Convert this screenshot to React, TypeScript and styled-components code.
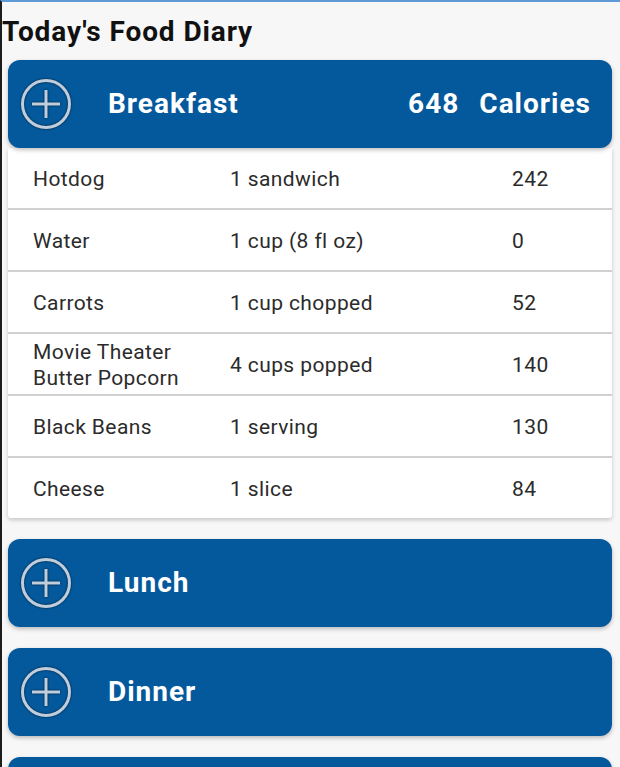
import React from "react";
import styled, { createGlobalStyle } from "styled-components";

const Global = createGlobalStyle`
  html, body { margin: 0; padding: 0; background: #f7f7f7; }
  body { font-family: Roboto, "Noto Sans", Arial, sans-serif; }
`;

const Page = styled.div`
  min-height: 100vh;
  box-sizing: border-box;
  border-top: 2px solid #5d9ad6;
  border-left: 2px solid #1c1c1c;
  background: #f7f7f7;
  padding: 16px 0 40px 0;
  overflow: hidden;
`;

const Title = styled.h1`
  margin: 0 0 14px 0;
  font-size: 28px;
  line-height: 28px;
  letter-spacing: 0.9px;
  font-weight: 700;
  color: #111;
`;

const Sections = styled.div`
  display: flex;
  flex-direction: column;
  gap: 21px;
  padding: 0 8px 0 6px;
`;

const Meal = styled.section`
  display: flex;
  flex-direction: column;
`;

const Header = styled.div`
  height: 88px;
  box-sizing: border-box;
  display: flex;
  align-items: center;
  background: #04599c;
  border-radius: 12px;
  padding: 0 21px 0 12px;
  color: #fff;
  box-shadow: 0 2px 4px rgba(0, 0, 0, 0.25);
  position: relative;
  z-index: 1;
`;

const IconWrap = styled.div`
  width: 52px;
  height: 52px;
  display: flex;
  align-items: center;
  justify-content: center;
  filter: drop-shadow(0 0 1px rgba(0, 0, 0, 0.7));
`;

const HeadText = styled.span`
  font-size: 28px;
  font-weight: 700;
  letter-spacing: 1px;
  line-height: 32px;
`;

const MealName = styled(HeadText)`
  margin-left: 36px;
  flex: 1;
`;

const Total = styled.div`
  display: flex;
  gap: 20px;
`;

const Table = styled.div`
  background: #fff;
  box-shadow: 0 2px 4px rgba(0, 0, 0, 0.2);
  border-radius: 0 0 3px 3px;
`;

const Row = styled.div`
  display: grid;
  grid-template-columns: 197px 282px 1fr;
  align-items: center;
  height: 62px;
  box-sizing: border-box;
  padding: 2px 0 0 25px;
  border-bottom: 2px solid #d0d0d0;
  &:last-child { border-bottom: none; height: 60px; }
  font-size: 21px;
  letter-spacing: 0.4px;
  color: #2b2b2b;
`;

const Cell = styled.div`
  line-height: 26px;
  padding-right: 14px;
`;

const PlusIcon = () => (
  <IconWrap>
    <svg width="52" height="52" viewBox="0 0 52 52">
      <circle cx="26" cy="26" r="23.5" fill="none" stroke="#bfcddd" strokeWidth="3" />
      <path d="M26 12 V40 M12 26 H40" stroke="#bfcddd" strokeWidth="3" fill="none" />
    </svg>
  </IconWrap>
);

type Food = { name: string; amount: string; cal: number };

const breakfast: Food[] = [
  { name: "Hotdog", amount: "1 sandwich", cal: 242 },
  { name: "Water", amount: "1 cup (8 fl oz)", cal: 0 },
  { name: "Carrots", amount: "1 cup chopped", cal: 52 },
  { name: "Movie Theater Butter Popcorn", amount: "4 cups popped", cal: 140 },
  { name: "Black Beans", amount: "1 serving", cal: 130 },
  { name: "Cheese", amount: "1 slice", cal: 84 },
];

const MealSection = ({ name, foods }: { name: string; foods?: Food[] }) => {
  const total = foods ? foods.reduce((s, f) => s + f.cal, 0) : 0;
  return (
    <Meal>
      <Header>
        <PlusIcon />
        <MealName>{name}</MealName>
        {foods && (
          <Total>
            <HeadText>{total}</HeadText>
            <HeadText>Calories</HeadText>
          </Total>
        )}
      </Header>
      {foods && (
        <Table>
          {foods.map((f) => (
            <Row key={f.name}>
              <Cell>{f.name}</Cell>
              <Cell>{f.amount}</Cell>
              <Cell>{f.cal}</Cell>
            </Row>
          ))}
        </Table>
      )}
    </Meal>
  );
};

export default function App() {
  return (
    <>
      <Global />
      <Page>
        <Title>Today's Food Diary</Title>
        <Sections>
          <MealSection name="Breakfast" foods={breakfast} />
          <MealSection name="Lunch" />
          <MealSection name="Dinner" />
          <MealSection name="Snacks" />
        </Sections>
      </Page>
    </>
  );
}
